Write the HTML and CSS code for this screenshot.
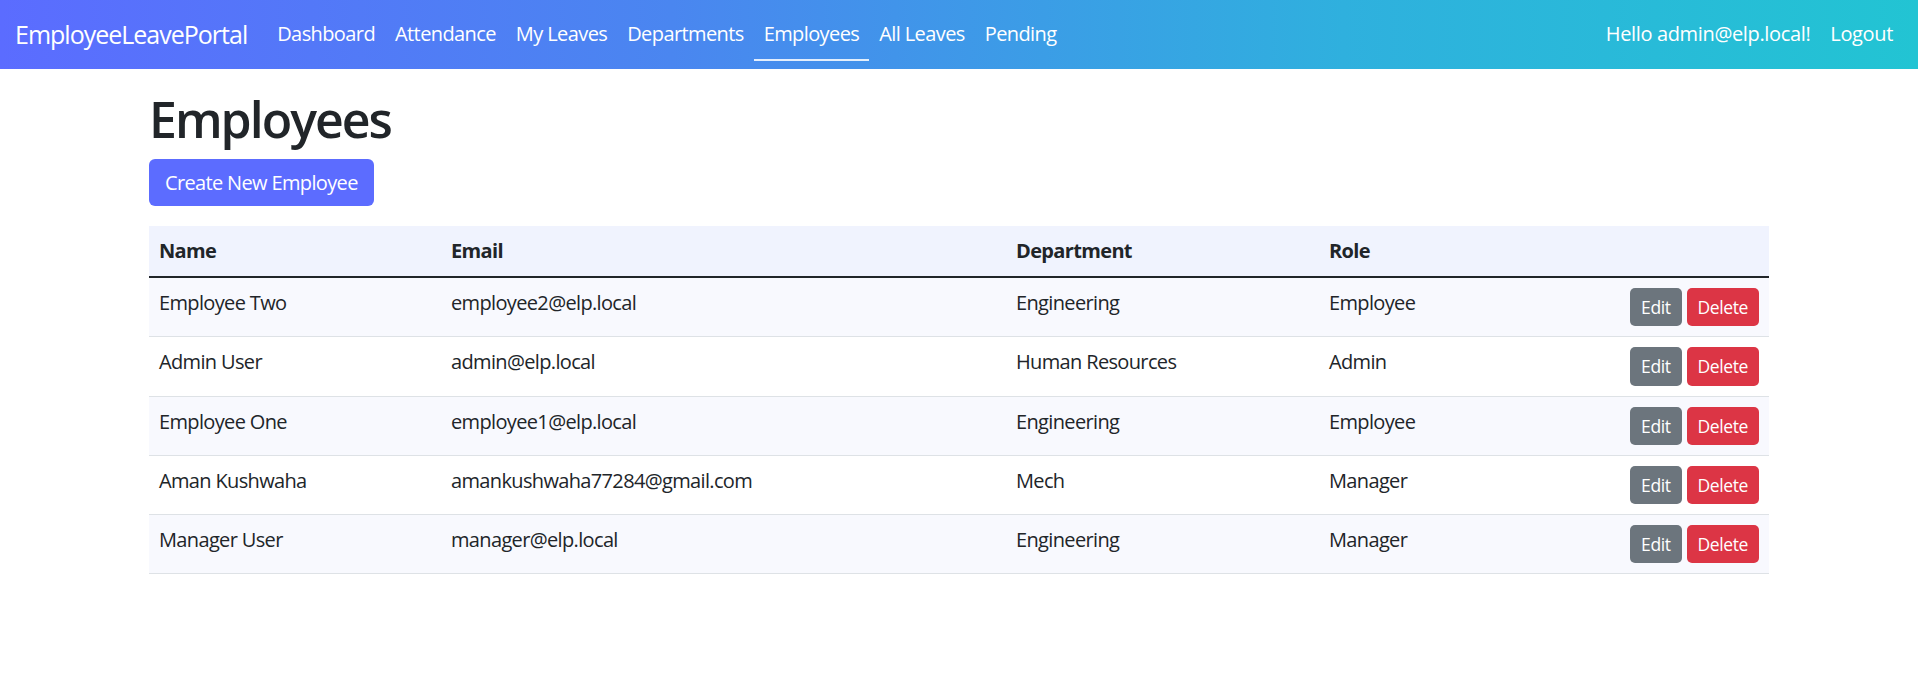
FILE: index.html
```html
<!DOCTYPE html>
<html lang="en">
<head>
<meta charset="utf-8">
<title>Employees - EmployeeLeavePortal</title>
<link rel="stylesheet" href="styles.css">
</head>
<body>
<header class="navbar">
  <a class="brand" href="#">EmployeeLeavePortal</a>
  <nav class="nav-main">
    <a class="nav-link" href="#">Dashboard</a>
    <a class="nav-link" href="#">Attendance</a>
    <a class="nav-link" href="#">My Leaves</a>
    <a class="nav-link" href="#">Departments</a>
    <a class="nav-link active" href="#">Employees</a>
    <a class="nav-link" href="#">All Leaves</a>
    <a class="nav-link" href="#">Pending</a>
  </nav>
  <nav class="nav-user">
    <a class="nav-link" href="#">Hello admin@elp.local!</a>
    <a class="nav-link" href="#">Logout</a>
  </nav>
</header>
<main class="container">
  <h1 class="title">Employees</h1>
  <p class="actions-bar"><a class="btn btn-primary" href="#">Create New Employee</a></p>
  <table class="table">
    <colgroup>
      <col class="c-name"><col class="c-email"><col class="c-dept"><col class="c-role"><col class="c-act">
    </colgroup>
    <thead>
      <tr><th>Name</th><th>Email</th><th>Department</th><th>Role</th><th></th></tr>
    </thead>
    <tbody>
      <tr><td>Employee Two</td><td>employee2@elp.local</td><td>Engineering</td><td>Employee</td><td><div class="row-actions"><a class="btn-sm btn-secondary" href="#">Edit</a><a class="btn-sm btn-danger" href="#">Delete</a></div></td></tr>
      <tr><td>Admin User</td><td>admin@elp.local</td><td>Human Resources</td><td>Admin</td><td><div class="row-actions"><a class="btn-sm btn-secondary" href="#">Edit</a><a class="btn-sm btn-danger" href="#">Delete</a></div></td></tr>
      <tr><td>Employee One</td><td>employee1@elp.local</td><td>Engineering</td><td>Employee</td><td><div class="row-actions"><a class="btn-sm btn-secondary" href="#">Edit</a><a class="btn-sm btn-danger" href="#">Delete</a></div></td></tr>
      <tr><td>Aman Kushwaha</td><td>amankushwaha77284@gmail.com</td><td>Mech</td><td>Manager</td><td><div class="row-actions"><a class="btn-sm btn-secondary" href="#">Edit</a><a class="btn-sm btn-danger" href="#">Delete</a></div></td></tr>
      <tr><td>Manager User</td><td>manager@elp.local</td><td>Engineering</td><td>Manager</td><td><div class="row-actions"><a class="btn-sm btn-secondary" href="#">Edit</a><a class="btn-sm btn-danger" href="#">Delete</a></div></td></tr>
    </tbody>
  </table>
</main>
</body>
</html>
```
FILE: styles.css
```css
* { box-sizing: border-box; }
html, body { margin: 0; padding: 0; }
body {
  font-family: "Open Sans", "Noto Sans", "Liberation Sans", sans-serif;
  font-size: 20px;
  line-height: 1.5;
  color: #212529;
  background: #fff;
}
a { text-decoration: none; }

.navbar {
  display: flex;
  align-items: center;
  height: 69px;
  padding: 0 15px;
  margin-bottom: 20px;
  background: linear-gradient(90deg, #5b6cff 0%, #4a86f0 35%, #2fb0de 70%, #22c4d3 100%);
}
.brand {
  color: #fff;
  font-size: 25px;
  line-height: 37.5px;
  margin-right: 20px;
  letter-spacing: -1px;
}
.nav-main, .nav-user { display: flex; align-items: stretch; }
.nav-main { flex: 1; }
.nav-link {
  display: block;
  color: #fff;
  padding: 10px 10px;
  line-height: 30px;
  letter-spacing: -0.6px;
  border-bottom: 2px solid transparent;
  margin-top: 1px;
}
.nav-user .nav-link { letter-spacing: -0.35px; }
.nav-link.active { border-bottom-color: rgba(255,255,255,0.85); }

.container {
  width: 1650px;
  margin: 0 auto;
  padding: 0 15px;
}
.title {
  margin: 0 0 10px;
  font-size: 50px;
  line-height: 60px;
  font-weight: 600;
  letter-spacing: -2px;
}
.actions-bar { margin: 0 0 20px; }
.btn {
  display: inline-block;
  padding: 7.5px 15px;
  border: 1px solid transparent;
  border-radius: 6px;
  line-height: 30px;
  font-size: 20px;
  letter-spacing: -0.65px;
}
.btn-primary { background: #5c6cff; color: #fff; }

.table {
  width: 100%;
  border-collapse: collapse;
  table-layout: fixed;
}
.c-name { width: 292px; }
.c-email { width: 565px; }
.c-dept { width: 313px; }
.c-role { width: 300px; }
.c-act { width: 150px; }
.table th, .table td {
  padding: 10px;
  text-align: left;
  vertical-align: top;
  letter-spacing: -0.65px;
}
.table thead th {
  background: #f0f3fe;
  font-weight: 700;
  border-bottom: 2.5px solid #212529;
}
.table tbody td { border-bottom: 1px solid #dee2e6; }
.table tbody tr:nth-child(odd) td { background: #f8f9fe; }
.row-actions {
  display: flex;
  justify-content: flex-end;
  gap: 5px;
}
.btn-sm {
  display: inline-block;
  padding: 5px 10px;
  border: 1px solid transparent;
  border-radius: 5px;
  font-size: 17.5px;
  line-height: 26.25px;
  color: #fff;
  letter-spacing: -0.4px;
}
.btn-secondary { background: #6c757d; }
.btn-danger { background: #dc3545; }
```
